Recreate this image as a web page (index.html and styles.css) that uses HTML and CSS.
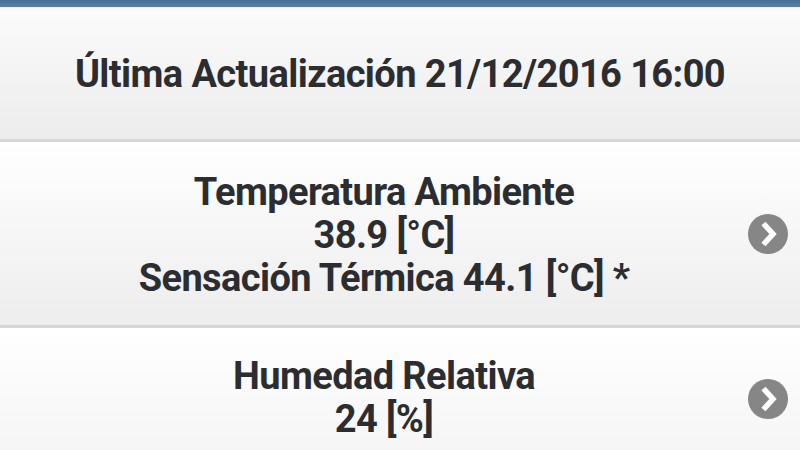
FILE: index.html
```html
<!DOCTYPE html>
<html lang="es">
<head>
<meta charset="utf-8">
<link rel="stylesheet" href="styles.css">
</head>
<body>
<div class="topbar"></div>
<div class="row header">
  <div class="text">Última Actualización 21/12/2016 16:00</div>
</div>
<div class="row item tall">
  <div class="text">Temperatura Ambiente<br>38.9 [°C]<br>Sensación Térmica 44.1 [°C] *</div>
  <span class="arrow"><svg viewBox="0 0 40 40" width="40" height="40"><circle cx="20" cy="20" r="20" fill="#868686"/><path d="M15.5 9.5 L25 20 L15.5 30.5" fill="none" stroke="#fff" stroke-width="5.5" stroke-linecap="butt" stroke-linejoin="miter"/></svg></span>
</div>
<div class="row item last">
  <div class="text">Humedad Relativa<br>24 [%]</div>
  <span class="arrow"><svg viewBox="0 0 40 40" width="40" height="40"><circle cx="20" cy="20" r="20" fill="#868686"/><path d="M15.5 9.5 L25 20 L15.5 30.5" fill="none" stroke="#fff" stroke-width="5.5" stroke-linecap="butt" stroke-linejoin="miter"/></svg></span>
</div>
</body>
</html>
```
FILE: styles.css
```css
html, body {
  margin: 0;
  padding: 0;
  background: #fff;
  overflow: hidden;
}
body {
  width: 800px;
  height: 450px;
  font-family: Roboto, "Liberation Sans", sans-serif;
  color: #2b2d30;
}
.topbar {
  height: 7px;
  background: linear-gradient(#4a6f97, #5a80a6);
}
.row {
  position: relative;
  display: flex;
  align-items: center;
  justify-content: center;
  border-bottom: 3px solid #d6d6d6;
  box-sizing: border-box;
}
.header {
  height: 135px;
  background: linear-gradient(#fbfbfb, #ececec);
  border-top: 1px solid #eef1f5;
}
.item {
  background: linear-gradient(#ffffff, #ededed);
  padding-right: 32px;
}
.tall {
  height: 186px;
}
.last {
  height: 140px;
  border-bottom: none;
  align-items: flex-start;
  padding-top: 23px;
  background: linear-gradient(#ffffff, #f4f4f4);
}
.text {
  font-size: 38px;
  font-weight: 700;
  line-height: 43px;
  text-align: center;
  letter-spacing: -0.6px;
  padding-top: 4px;
}
.header .text {
  padding-top: 2px;
}
.arrow {
  position: absolute;
  right: 12px;
  top: 50%;
  margin-top: -20px;
  width: 40px;
  height: 40px;
}
.last .arrow {
  top: 51px;
  margin-top: 0;
}
```
